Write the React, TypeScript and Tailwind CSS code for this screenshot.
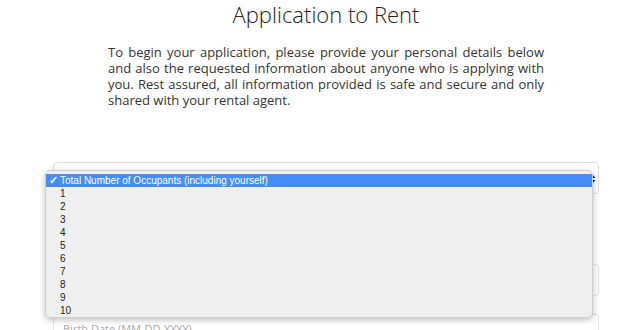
const occupants = ["1", "2", "3", "4", "5", "6", "7", "8", "9", "10"];

function SelectArrows() {
  return (
    <svg width="7" height="10" viewBox="0 0 7 10" className="absolute right-[2px] top-[11px]">
      <path d="M3.5 0.5 L6.5 4 L0.5 4 Z" fill="#1f1f1f" />
      <path d="M3.5 9.5 L6.5 6 L0.5 6 Z" fill="#1f1f1f" />
    </svg>
  );
}

// Native-looking open select list that covers the form below
function OccupantMenu() {
  return (
    <div
      className="absolute left-[45px] top-[170px] w-[548px] h-[148px] bg-[#efefef] border border-[#cfcfcf] rounded-[5px] shadow-[0_2px_6px_rgba(0,0,0,0.25)] pt-[3px] text-[10px] text-[#1c1c1c] leading-[13px]"
      style={{ fontFamily: '"Liberation Sans", Arial, sans-serif' }}
    >
      <div className="h-[13px] bg-[#468dfb] text-white flex items-center">
        <span className="w-[14px] pl-[3px] text-[11px] font-bold">✓</span>
        <span>Total Number of Occupants (including yourself)</span>
      </div>
      {occupants.map((n) => (
        <div key={n} className="h-[13px] pl-[14px] flex items-center">
          {n}
        </div>
      ))}
    </div>
  );
}

export default function App() {
  return (
    <div
      className="relative w-[640px] h-[330px] overflow-hidden bg-white"
      style={{ fontFamily: '"Open Sans", "Liberation Sans", sans-serif' }}
    >
      <div className="ml-[53px] w-[546px]">
        <h1 className="pt-[1px] text-center text-[22px] font-light leading-[26px] text-[#222]">
          Application to Rent
        </h1>

        <p className="mx-[55px] mt-[17px] text-justify text-[13px] leading-[16px] text-[#333]">
          To begin your application, please provide your personal details below and also the
          requested information about anyone who is applying with you. Rest assured, all
          information provided is safe and secure and only shared with your rental agent.
        </p>

        <div className="mt-[54px] flex flex-col">
          <div className="relative h-[32px] rounded-[4px] border border-[#dcdcdc] bg-white">
            <SelectArrows />
          </div>
          <div className="h-[70px]" />
          <div className="h-[32px] rounded-[3px] border border-[#e2e2e2] bg-white" />
          <div className="mt-[18px] h-[32px] rounded-[3px] border border-[#e2e2e2] bg-white px-[9px] pt-[6px] text-[11px] leading-[16px] text-[#aaa]">
            Birth Date (MM-DD-YYYY)
          </div>
        </div>
      </div>

      <OccupantMenu />
    </div>
  );
}
